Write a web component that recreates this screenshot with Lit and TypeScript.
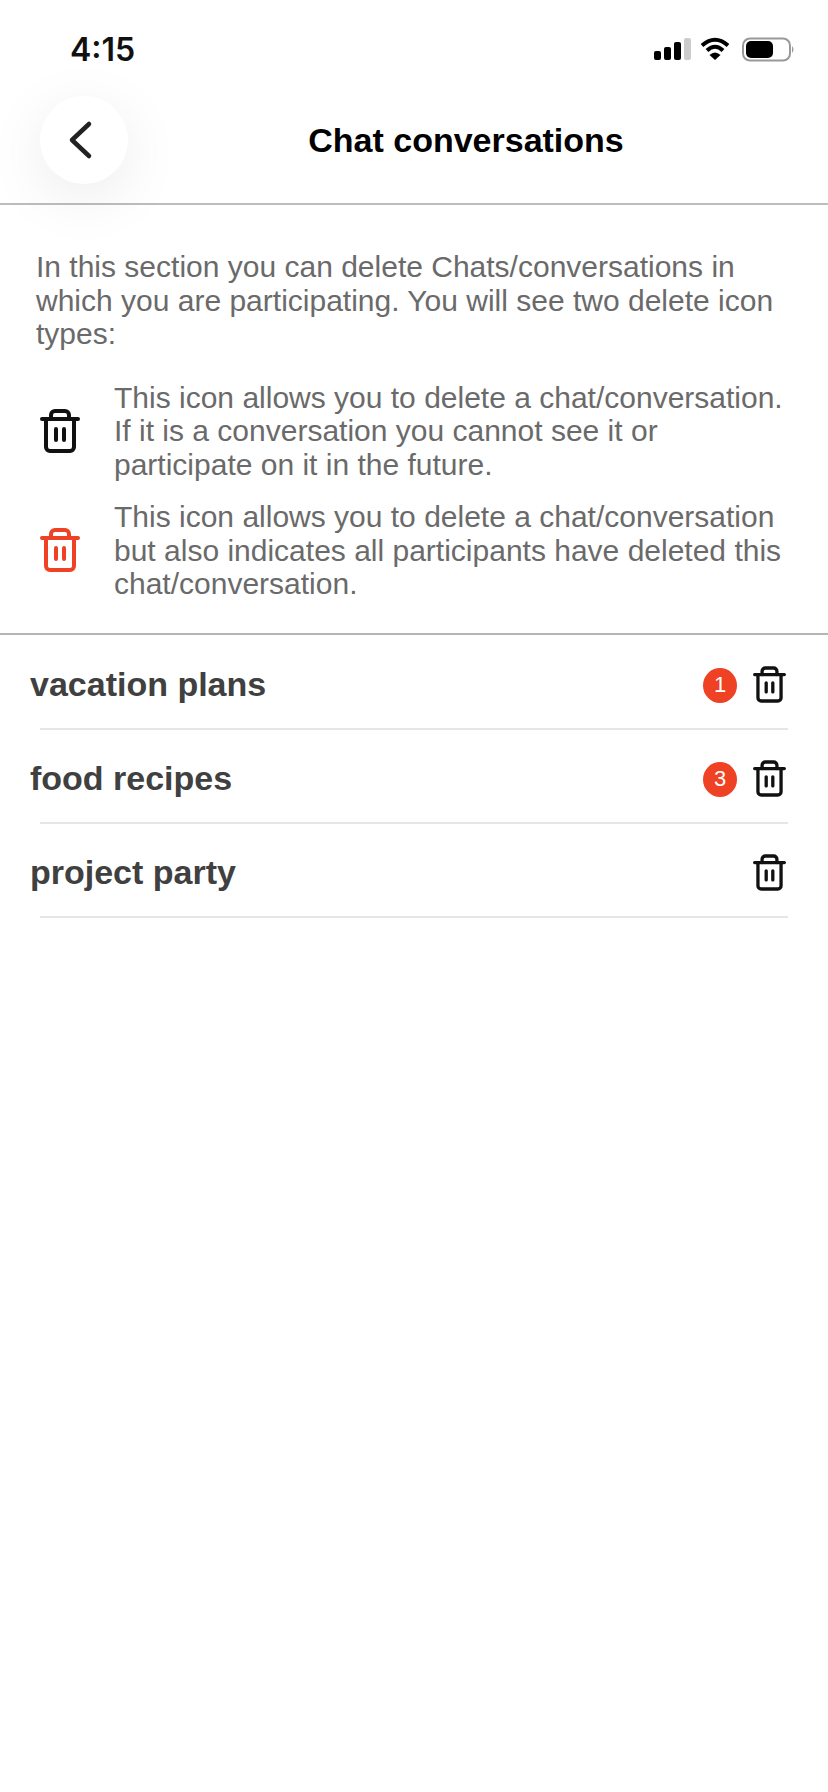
import { html, css, svg, LitElement } from 'lit';
import { customElement } from 'lit/decorators.js';

const trash = svg`
  <path d="M6 10V38a4 4 0 0 0 4 4H30a4 4 0 0 0 4-4V10" />
  <path d="M11 10V6a4 4 0 0 1 4-4H25a4 4 0 0 1 4 4V10" />
  <path d="M2 10H38" />
  <path d="M16 20V31M24 20V31" />
`;

const chats = [
  { name: 'vacation plans', unread: 1 },
  { name: 'food recipes', unread: 3 },
  { name: 'project party', unread: 0 },
];

@customElement('app-root')
export class AppRoot extends LitElement {
  static styles = css`
    :host {
      display: block;
      width: 828px;
      height: 1792px;
      background: #fff;
      font-family: 'Liberation Sans', Arial, sans-serif;
      overflow: hidden;
    }
    .status {
      height: 80px;
      box-sizing: border-box;
      padding: 30px 34px 0 70px;
      display: flex;
      justify-content: space-between;
    }
    .time {
      font-family: Inter, sans-serif;
      font-weight: 600;
      font-size: 32px;
      line-height: 40px;
      color: #111;
    }
    .status-icons {
      display: block;
      margin-top: 7px;
    }
    .header {
      height: 125px;
      box-sizing: border-box;
      border-bottom: 2px solid #bdbdbd;
      display: flex;
      align-items: flex-start;
      padding: 16px 40px 0;
      position: relative;
    }
    .back {
      width: 88px;
      height: 88px;
      border-radius: 50%;
      background: #fff;
      box-shadow: 0 14px 60px rgba(0, 0, 0, 0.08);
      display: flex;
      align-items: center;
      justify-content: center;
    }
    .back svg {
      margin-left: -6px;
    }
    .title {
      flex: 1;
      text-align: center;
      font-size: 34px;
      font-weight: 700;
      line-height: 88px;
      color: #000;
      padding-left: 16px;
    }
    .intro {
      padding: 45px 36px 0;
      font-size: 30px;
      line-height: 33.5px;
      color: #6a6a6a;
    }
    .legend {
      display: grid;
      grid-template-columns: 40px 1fr;
      column-gap: 34px;
      row-gap: 19px;
      align-items: center;
      padding: 30px 30px 32.5px 40px;
      border-bottom: 2px solid #b5b5b5;
      font-size: 30px;
      line-height: 33.5px;
      color: #6a6a6a;
    }
    .legend svg {
      display: block;
    }
    .trash {
      fill: none;
      stroke-width: 4;
      stroke-linecap: round;
      stroke-linejoin: round;
      stroke: #111;
    }
    .trash.red {
      stroke: #ef4123;
    }
    .list {
      padding-top: 1px;
    }
    .row {
      height: 94px;
      box-sizing: border-box;
      margin: 0 40px;
      border-bottom: 2px solid #e6e6e6;
      display: flex;
      align-items: center;
      position: relative;
    }
    .name {
      flex: 1;
      margin-left: -10px;
      margin-top: 5px;
      font-size: 34px;
      font-weight: 700;
      color: #404040;
    }
    .badge {
      width: 34px;
      height: 35px;
      border-radius: 50%;
      background: #ef4123;
      color: #fff;
      font-size: 22px;
      display: flex;
      align-items: center;
      justify-content: center;
      margin-right: 16px;
      margin-top: 6px;
    }
    .row .trash {
      margin-right: 2px;
      margin-top: 4px;
    }
  `;

  render() {
    return html`
      <div class="status">
        <span class="time">4:15</span>
        <svg class="status-icons" width="140" height="26" viewBox="0 0 140 26">
          <rect x="0" y="14" width="7" height="9" rx="2" fill="#000" />
          <rect x="10" y="10" width="7" height="13" rx="2" fill="#000" />
          <rect x="20" y="5" width="7" height="18" rx="2" fill="#000" />
          <rect x="30" y="1" width="7" height="22" rx="2" fill="#ccc" />
          <path d="M48 8.5Q61 -3 74 8.5" fill="none" stroke="#000" stroke-width="4" />
          <path d="M53 13.5Q61 6 69 13.5" fill="none" stroke="#000" stroke-width="4" />
          <path d="M55.5 18Q61 13 66.5 18L61 23Z" fill="#000" />
          <rect x="89" y="1.5" width="47" height="22" rx="7" fill="none" stroke="#999" stroke-width="2" />
          <rect x="92" y="4" width="27" height="17" rx="5" fill="#000" />
          <path d="M138 9Q141 12.5 138 16Z" fill="#999" />
        </svg>
      </div>
      <div class="header">
        <div class="back">
          <svg width="26" height="40" viewBox="0 0 26 40" fill="none">
            <path d="M21 4L4 20L21 36" stroke="#222" stroke-width="4.5" stroke-linecap="round" stroke-linejoin="round" />
          </svg>
        </div>
        <div class="title">Chat conversations</div>
      </div>
      <div class="intro">
        In this section you can delete Chats/conversations in<br />which you are participating. You will see two delete icon<br />types:
      </div>
      <div class="legend">
        <svg class="trash" width="40" height="44" viewBox="0 0 40 44">${trash}</svg>
        <div>This icon allows you to delete a chat/conversation.<br />If it is a conversation you cannot see it or<br />participate on it in the future.</div>
        <svg class="trash red" width="40" height="44" viewBox="0 0 40 44">${trash}</svg>
        <div>This icon allows you to delete a chat/conversation<br />but also indicates all participants have deleted this<br />chat/conversation.</div>
      </div>
      <div class="list">
        ${chats.map(
          c => html`
            <div class="row">
              <span class="name">${c.name}</span>
              ${c.unread ? html`<span class="badge">${c.unread}</span>` : ''}
              <svg class="trash" width="33" height="37" viewBox="0 0 40 44">${trash}</svg>
            </div>
          `
        )}
      </div>
    `;
  }
}
